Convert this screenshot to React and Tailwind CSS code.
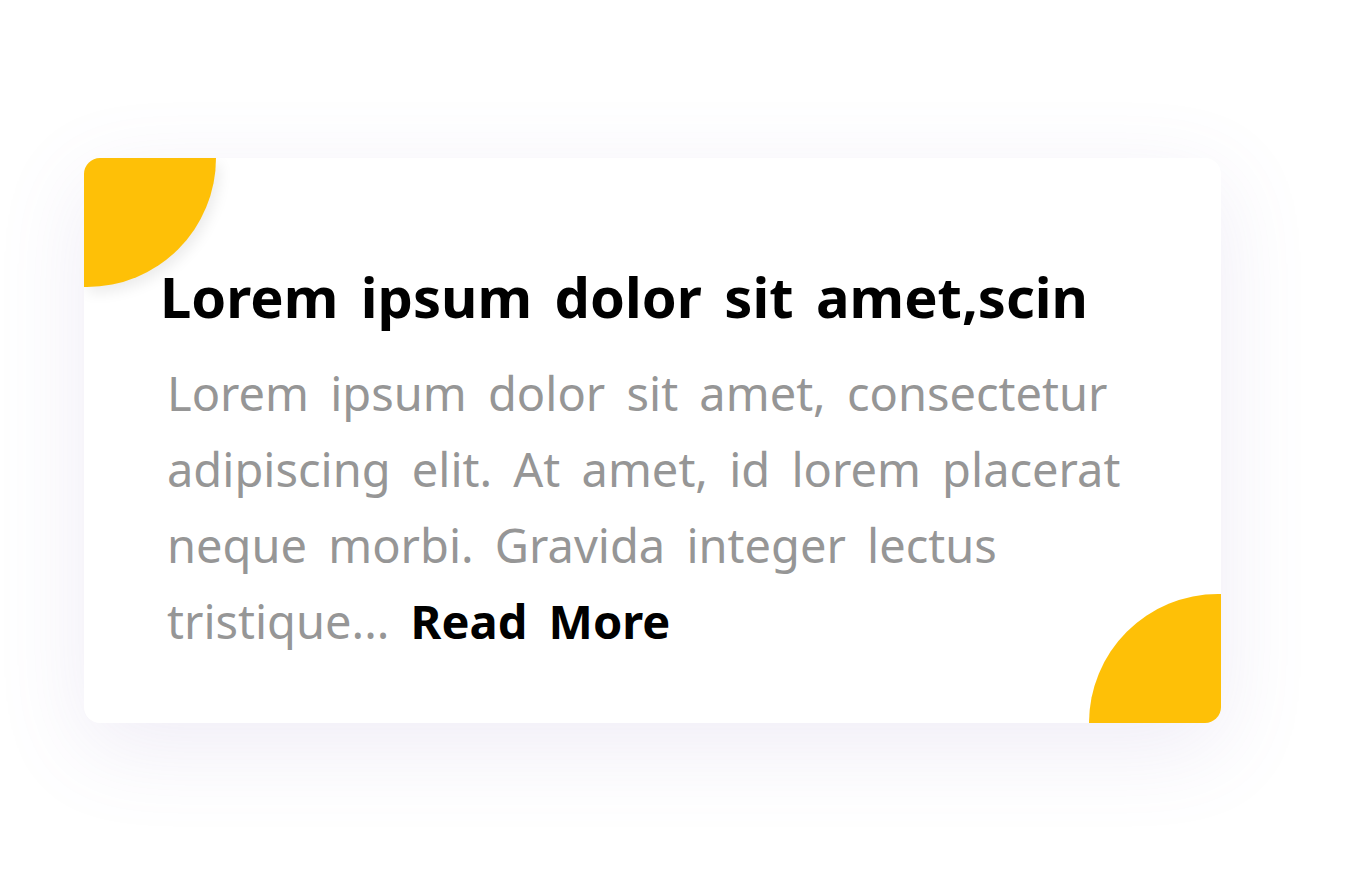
import React from 'react';

const App = () => {
  return (
    <div className="min-h-screen w-full bg-white pl-[84px] pt-[158px] font-['Noto_Sans',sans-serif]">
      <div className="relative w-[1137px] h-[565px] rounded-2xl bg-white shadow-[0_24px_90px_rgba(120,100,180,0.12)] overflow-hidden">
        {/* corner shapes */}
        <div className="absolute left-0 top-0 w-[132px] h-[129px] rounded-br-full bg-[#fec007] shadow-[4px_6px_14px_rgba(0,0,0,0.08)]" />
        <div className="absolute right-0 bottom-0 w-[132px] h-[129px] rounded-tl-full bg-[#fec007]" />

        <div className="relative pl-[76px] pr-[80px] pt-[104px]">
          <h2 className="text-[56px] font-bold leading-[68px] text-black [word-spacing:8px]">
            Lorem ipsum dolor sit amet,scin
          </h2>
          <p className="mt-[25px] pl-[7px] text-[47px] leading-[76px] text-[#969696] [word-spacing:9px]">
            Lorem ipsum dolor sit amet, consectetur adipiscing elit. At amet, id lorem placerat neque morbi. Gravida integer lectus tristique...{' '}
            <a href="#" className="font-bold text-black">Read More</a>
          </p>
        </div>
      </div>
    </div>
  );
};

export default App;
